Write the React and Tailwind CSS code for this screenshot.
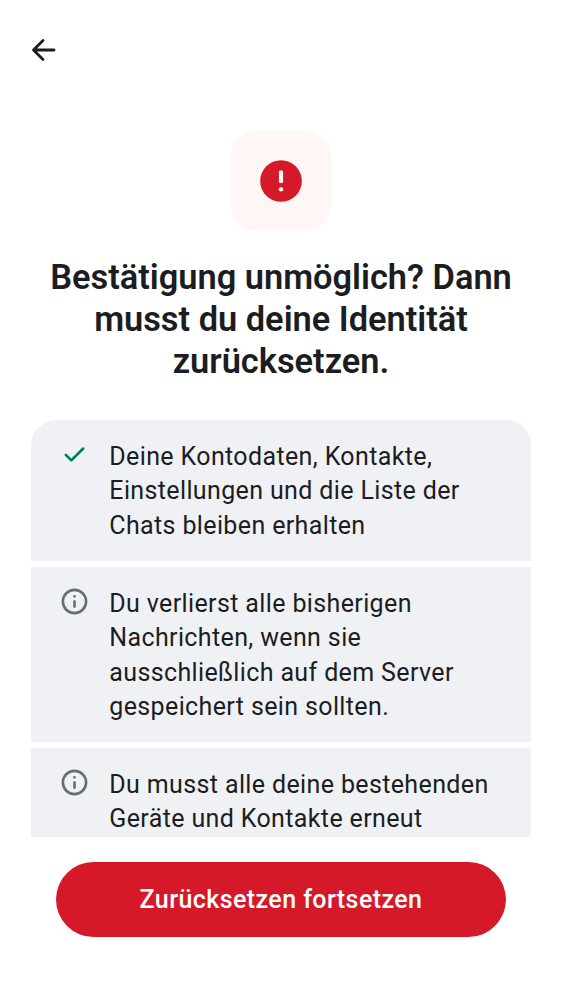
const CheckIcon = () => (
  <svg viewBox="0 0 24 24" className="size-[31px] fill-[#007a61]">
    <path d="M9.55 17.575c-.133 0-.258-.02-.375-.063a.9.9 0 0 1-.325-.212L4.55 13a.93.93 0 0 1-.263-.713.98.98 0 0 1 .288-.712.95.95 0 0 1 .7-.275.95.95 0 0 1 .7.275L9.55 15.15l8.475-8.475q.274-.275.713-.275.437 0 .712.275.275.274.275.713 0 .437-.275.712l-9.2 9.2q-.15.15-.325.212a1.1 1.1 0 0 1-.375.063" />
  </svg>
);

const InfoIcon = () => (
  <svg viewBox="0 0 24 24" className="size-[31px] fill-[#656d77]">
    <circle cx="12" cy="8" r="1" />
    <rect x="11" y="11" width="2" height="6" rx="0.9" />
    <path fillRule="evenodd" d="M22 12c0 5.523-4.477 10-10 10S2 17.523 2 12 6.477 2 12 2s10 4.477 10 10m-2 0a8 8 0 1 1-16 0 8 8 0 0 1 16 0" />
  </svg>
);

const Item = ({ icon, lines, className }) => (
  <li className={`flex items-start gap-[19px] bg-[#f0f1f5] pl-[28.3px] ${className}`}>
    <span className="shrink-0">{icon}</span>
    <p className="mt-[1.1px] whitespace-nowrap text-[25px] leading-[34.4px] tracking-[0.37px]">
      {lines.map((line) => (
        <span key={line} className="block">{line}</span>
      ))}
    </p>
  </li>
);

export default function App() {
  return (
    <main className="flex h-[1000px] w-[562px] flex-col overflow-hidden bg-white font-['Roboto',sans-serif] text-[#1b1d22]">
      <header className="flex h-[99px] shrink-0 items-center pl-7">
        <button aria-label="Zurück">
          <svg viewBox="0 0 31 31" className="size-[31px] fill-none stroke-[#1b1d22] stroke-[2.8]">
            <path d="M26 16H6M15 6.5 5.5 16l9.5 9.5" strokeLinecap="round" strokeLinejoin="round" />
          </svg>
        </button>
      </header>
      <div className="mt-[32px] flex size-[100px] shrink-0 items-center justify-center self-center rounded-[25px] bg-[#fff7f6]">
        <svg viewBox="0 0 24 24" className="size-[50px]">
          <circle cx="12" cy="12" r="10" className="fill-[#d51928]" />
          <rect x="11" y="7" width="2" height="6" rx="0.7" className="fill-white" />
          <circle cx="12" cy="16" r="1.05" className="fill-white" />
        </svg>
      </div>
      <h1 className="mt-[25px] shrink-0 text-center text-[34.4px] font-semibold leading-[42.2px]">
        Bestätigung unmöglich? Dann<br />musst du deine Identität<br />zurücksetzen.
      </h1>
      <ul className="mx-[31px] mt-[37px] flex h-[417px] shrink-0 flex-col gap-[6px] overflow-hidden rounded-t-[25px]">
        <Item className="h-[141px] shrink-0 pt-[19px]" icon={<CheckIcon />} lines={["Deine Kontodaten, Kontakte,", "Einstellungen und die Liste der", "Chats bleiben erhalten"]} />
        <Item className="h-[175px] shrink-0 pt-[19px]" icon={<InfoIcon />} lines={["Du verlierst alle bisherigen", "Nachrichten, wenn sie", "ausschließlich auf dem Server", "gespeichert sein sollten."]} />
        <Item className="h-[89px] shrink-0 pt-[19px]" icon={<InfoIcon />} lines={["Du musst alle deine bestehenden", "Geräte und Kontakte erneut"]} />
      </ul>
      <button className="mx-14 mt-[25.5px] h-[75px] shrink-0 rounded-full bg-[#d51928] pt-px text-[25px] font-medium tracking-[0.42px] text-white">
        Zurücksetzen fortsetzen
      </button>
    </main>
  );
}
